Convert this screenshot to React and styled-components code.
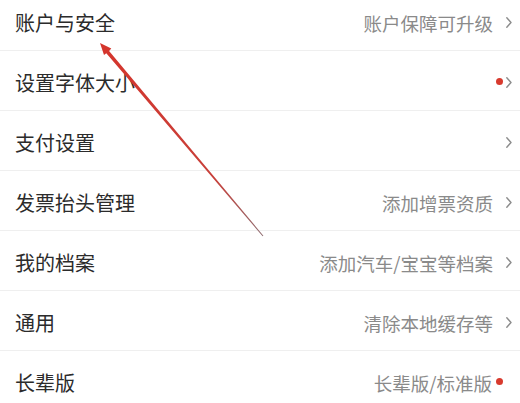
import React from "react";
import styled, { createGlobalStyle } from "styled-components";

const Global = createGlobalStyle`
  html, body { margin: 0; padding: 0; background: #fff; }
  body { width: 520px; height: 403px; overflow: hidden; }
`;

const Page = styled.div`
  position: relative;
  width: 520px;
  height: 403px;
  overflow: hidden;
  background: #fff;
  font-family: "Noto Sans CJK SC", "Noto Sans", sans-serif;
`;

const List = styled.div`
  display: flex;
  flex-direction: column;
  margin-top: -9px;
`;

const Row = styled.div`
  display: flex;
  align-items: center;
  justify-content: space-between;
  height: 60px;
  box-sizing: border-box;
  padding: 4px 8px 0 15px;
  border-bottom: 1px solid #efefef;
`;

const Label = styled.span`
  font-size: 20px;
  color: #2b2b2b;
`;

const Right = styled.div`
  display: flex;
  align-items: center;
`;

const Hint = styled.span`
  font-size: 18.5px;
  color: #8a8a8a;
`;

const Dot = styled.span`
  width: 7px;
  height: 7px;
  border-radius: 50%;
  background: #d83a2e;
  margin-left: ${(p) => p.$gap}px;
  margin-right: ${(p) => p.$end}px;
  margin-top: -3px;
`;

const Chevron = styled.svg`
  width: 6px;
  height: 11px;
  margin-left: ${(p) => p.$gap}px;
  flex: none;
`;

const Overlay = styled.svg`
  position: absolute;
  left: 0;
  top: 0;
  width: 520px;
  height: 403px;
  pointer-events: none;
`;

const rows = [
  { label: "账户与安全", hint: "账户保障可升级", chevron: true },
  { label: "设置字体大小", dot: true, chevron: true },
  { label: "支付设置", chevron: true },
  { label: "发票抬头管理", hint: "添加增票资质", chevron: true },
  { label: "我的档案", hint: "添加汽车/宝宝等档案", chevron: true },
  { label: "通用", hint: "清除本地缓存等", chevron: true },
  { label: "长辈版", hint: "长辈版/标准版", dot: true },
];

export default function App() {
  return (
    <Page>
      <Global />
      <List>
        {rows.map((r) => (
          <Row key={r.label}>
            <Label>{r.label}</Label>
            <Right>
              {r.hint && <Hint>{r.hint}</Hint>}
              {r.dot && <Dot $gap={r.hint ? 4 : 0} $end={r.chevron ? 0 : 9} />}
              {r.chevron && (
                <Chevron viewBox="0 0 6 11" $gap={r.dot ? 3 : 13}>
                  <polyline points="0.8,0.8 5,5.5 0.8,10.2" fill="none" stroke="#8c8c8c" strokeWidth="1.4" strokeLinecap="round" strokeLinejoin="round" />
                </Chevron>
              )}
            </Right>
          </Row>
        ))}
      </List>
      <Overlay viewBox="0 0 520 403">
        <defs>
          <linearGradient id="arr" x1="100" y1="43" x2="263" y2="236" gradientUnits="userSpaceOnUse">
            <stop offset="0" stopColor="#d5352c" />
            <stop offset="0.7" stopColor="#c8403a" />
            <stop offset="1" stopColor="#8f6e72" />
          </linearGradient>
        </defs>
        <polygon
          points="100,43 111.3,48.4 109.1,51.0 263.4,235.7 262.6,236.3 106.3,53.3 104.0,55.0"
          fill="url(#arr)"
        />
      </Overlay>
    </Page>
  );
}
